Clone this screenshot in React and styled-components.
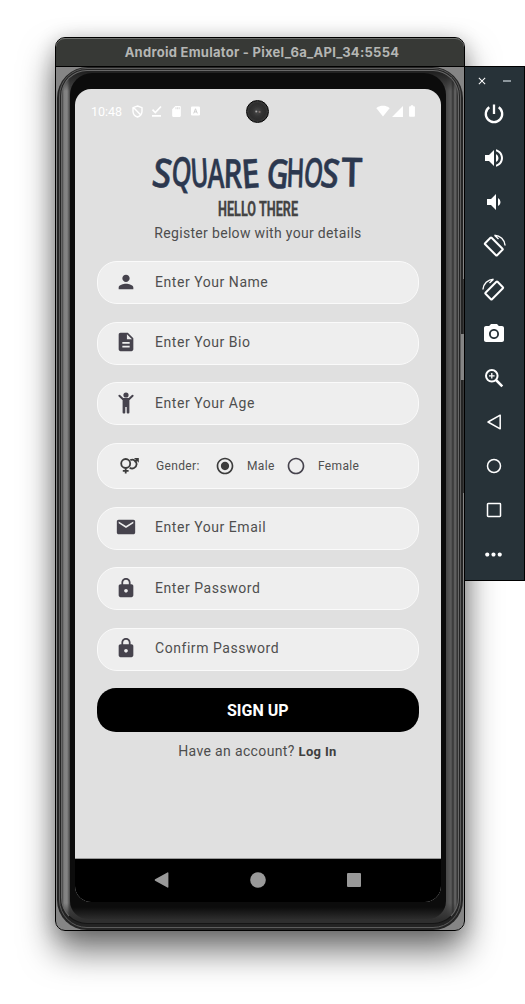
import React from "react";
import styled, { createGlobalStyle } from "styled-components";
import {
  MdPerson, MdDescription, MdEmail, MdLock, MdVolumeUp, MdVolumeDown,
  MdPhotoCamera, MdSdCard, MdSignalWifi4Bar, MdSignalCellular4Bar, MdBatteryFull,
  MdRadioButtonChecked, MdRadioButtonUnchecked, MdMoreHoriz, MdClose,
} from "react-icons/md";

const GlobalStyle = createGlobalStyle`
  * { box-sizing: border-box; }
  body { margin: 0; background: #fff; font-family: Roboto, sans-serif; overflow: hidden; }
  svg { display: block; flex: none; }
`;

const Desktop = styled.main`
  width: 525px;
  height: 1004px;
  display: flex;
  align-items: flex-start;
  padding: 37px 0 0 55px;
  background: #fff;
  overflow: hidden;
`;

const Window = styled.section`
  width: 410px;
  height: 894px;
  flex: none;
  border: 1px solid #000;
  border-radius: 10px;
  background: #858585;
  overflow: hidden;
  display: flex;
  flex-direction: column;
`;

const WindowShadow = styled.div`
  flex: none;
  border-radius: 10px;
  box-shadow: 0 20px 34px rgba(0, 0, 0, 0.55), 0 2px 20px rgba(0, 0, 0, 0.2);
`;

const TitleBar = styled.header`
  height: 29px;
  flex: none;
  display: flex;
  align-items: center;
  justify-content: center;
  background: #373936;
  border-top: 1px solid #70726f;
  border-bottom: 1px solid #000;
  border-radius: 9px 9px 0 0;
  color: #b5b6b4;
  font: 700 13px Inter, sans-serif;
  letter-spacing: 0.27px;
  padding: 0 0 2px 4px;
  white-space: pre;
`;

const Rim = styled.div`
  position: relative;
  flex: 1;
  margin: 0 1px;
  padding: 1px 2px 2px;
  border-radius: 31px 31px 30px 30px;
  background: #252525;
  display: flex;
`;

/* Hardware key on the right edge, drawn over the rim */
const SideKey = styled.span`
  position: absolute;
  right: ${(p) => (p.$raised ? 0 : -1)}px;
  top: ${(p) => p.$top}px;
  width: ${(p) => (p.$raised ? 2 : 1)}px;
  height: ${(p) => p.$h}px;
  background: ${(p) => (p.$raised ? "#858585" : "#3a3a3a")};
`;

const Bevel = styled.div`
  flex: 1;
  display: flex;
  border-radius: 28px;
  border: 1px solid #5c5c5c;
  background: #232323;
  padding: 1px 1px 3px;
`;

const Metal = styled.div`
  flex: 1;
  display: flex;
  border-radius: 26px;
  padding: 2px 12px 4px 8px;
  border: 1px solid #686868;
  border-bottom-color: #151515;
  background:
    linear-gradient(#222 0, #222 2px, transparent 20px, transparent calc(100% - 20px), #2e2e2e calc(100% - 3px)),
    linear-gradient(90deg, #444 0, #808080 2px, #858585 5px, #444 8px, #222 50%, #484848 calc(100% - 12px), #5c5c5c calc(100% - 7px), #333 calc(100% - 5px), #6a6a6a calc(100% - 3px), #282828 100%);
`;

const Bezel = styled.div`
  flex: 1;
  border-radius: 22px 22px 18px 18px;
  background: linear-gradient(#0c0c0c 0, #0c0c0c 98.6%, #2c2c2c 100%);
  padding: 16px 5px 0;
`;

const Screen = styled.div`
  width: 366px;
  height: 813px;
  border-radius: 16px;
  overflow: hidden;
  display: flex;
  flex-direction: column;
  background: #e0e0e0;
`;

const StatusBar = styled.div`
  height: 44px;
  flex: none;
  display: flex;
  align-items: center;
  padding: 0 22px 0 16px;
  color: #fff;
`;

const Clock = styled.span`
  font-size: 12.5px;
  width: 41px;
`;

const StatusGroup = styled.div`
  display: flex;
  align-items: center;
  gap: ${(p) => p.$gap}px;
`;

const Camera = styled.div`
  width: 23px;
  height: 23px;
  border-radius: 50%;
  border: 1px solid #000;
  margin-left: 46px;
  margin-right: auto;
  background:
    radial-gradient(circle at 44% 50%, #bbb 0, transparent 1.5px),
    radial-gradient(circle at 60% 52%, #93817c 0, transparent 1.5px),
    radial-gradient(circle, #4a4a4a 0, #333 5px, #2d2d2d 8px, #3c3c3c 11px);
`;

const Heading = styled.div`
  height: 128px;
  flex: none;
  display: flex;
  flex-direction: column;
  align-items: center;
`;

const Brand = styled.h1`
  margin: 0;
  height: 66px;
  padding-top: 20px;
  display: flex;
  align-items: center;
  color: #2c384f;
`;

const BrandMark = styled.svg`
  width: 212px;
  height: 38px;
  overflow: visible;
`;

const Greeting = styled.svg`
  width: 80px;
  height: 22px;
  overflow: visible;
  color: #444;
`;

const Lead = styled.p`
  margin: 3px 0 0;
  font-size: 14px;
  line-height: 18px;
  letter-spacing: 0.32px;
  color: #4d4d4d;
  white-space: nowrap;
`;

const Form = styled.form`
  display: flex;
  flex-direction: column;
  gap: 17.5px;
  padding: 0 22.5px 0 22px;
`;

const Field = styled.label`
  height: ${(p) => (p.$tall ? 46.5 : 43)}px;
  border-radius: 20px;
  border: 1px solid #fafafa;
  background: #eee;
  display: flex;
  align-items: center;
  padding-left: ${(p) => (p.$tall ? 22 : 17)}px;
  padding-bottom: ${(p) => (p.$tall ? 0 : 1.2)}px;
  color: #454545;
`;

const FieldIcon = styled.span`
  width: ${(p) => (p.$wide ? 36 : 40)}px;
  display: flex;
  color: #46434d;
`;

const FieldText = styled.span`
  font-size: 14px;
  letter-spacing: 0.55px;
  color: #4f4f4f;
`;

const SmallText = styled.span`
  font-size: 12px;
  letter-spacing: 0.35px;
  color: #4f4f4f;
  width: ${(p) => p.$w}px;
`;

const Radio = styled.span`
  display: flex;
  width: ${(p) => p.$w}px;
  color: ${(p) => (p.$on ? "#3c3c3c" : "#46434d")};
`;

const SignUp = styled.button`
  height: 44px;
  border: 0;
  border-radius: 19px;
  background: #000;
  color: #fff;
  font: 700 16px Roboto, sans-serif;
  padding: 0;
`;

const LoginLine = styled.p`
  margin: 10px 1px 0 0;
  text-align: center;
  font-size: 14px;
  line-height: 18px;
  letter-spacing: 0.35px;
  color: #4d4d4d;
  white-space: nowrap;
  b { font-size: 13px; color: #3f3f3f; }
`;

const NavBar = styled.nav`
  margin-top: auto;
  height: 44px;
  flex: none;
  background: #000;
  border-top: 1px solid #999;
  padding: 0 1px 2px 0;
  display: flex;
  align-items: center;
  justify-content: center;
  gap: 80px;
`;

const Toolbar = styled.aside`
  width: 61px;
  height: 515px;
  margin: 29px 0 0 -1px;
  flex: none;
  background: #273238;
  border: 1px solid #000;
  color: #fff;
  display: flex;
  flex-direction: column;
  align-items: center;
  z-index: 1;
`;

const ToolbarTop = styled.div`
  height: 25px;
  width: 100%;
  padding: 3px 13px 0 11px;
  display: flex;
  align-items: center;
  justify-content: space-between;
`;

const Dash = styled.span`
  width: 8px;
  height: 2px;
  background: #8d979d;
`;

const Tool = styled.span`
  height: 44px;
  width: 100%;
  padding: 0 2px 0 0;
  display: flex;
  align-items: center;
  justify-content: center;
`;

const Child = () => (
  <svg width="22" height="22" viewBox="-3 0 22 22" fill="currentColor">
    <circle cx="8" cy="3" r="2.6" />
    <path d="M1.4 3.7 4.8 7h6.4l3.4-3.3" fill="none" stroke="currentColor" strokeWidth="2" strokeLinecap="round" strokeLinejoin="round" />
    <path d="M4.6 6.2h6.8v14.2a1 1 0 0 1-1 1h-.7a1 1 0 0 1-1-1V15H7.3v5.4a1 1 0 0 1-1 1h-.7a1 1 0 0 1-1-1z" />
  </svg>
);

const Gender = () => (
  <svg width="20" height="16" viewBox="0 0 20 16" fill="none" stroke="#3c3c3c" strokeWidth="1.8">
    <circle cx="5.7" cy="5.5" r="4.5" />
    <path d="M5.7 10v5.5M2.8 12.8h5.8M10.3 2.1a4.4 4.4 0 1 1-.6 7.6M14.5 4l3-2.6" />
    <path d="M14 0H18.8v4.8z" fill="#3c3c3c" stroke="none" />
  </svg>
);

const Shield = () => (
  <svg width="11" height="13" viewBox="0 0 11 13" fill="none" stroke="currentColor" strokeWidth="1.4">
    <path d="M5.5 1 10 2.7v3.5c0 2.5-1.7 4.8-4.5 5.8C2.7 11 1 8.7 1 6.2V2.7zM2 3l6.5 6.8" />
  </svg>
);

const CheckLine = () => (
  <svg width="11" height="12" viewBox="0 0 11 12" fill="none" stroke="currentColor" strokeWidth="1.7">
    <path d="m1.5 4.7 2.8 2.8 5.7-6M1 10.8h9" />
  </svg>
);

const LetterBadge = () => (
  <svg width="9" height="10" viewBox="0 0 10 10">
    <rect width="10" height="10" rx="1.3" fill="#fff" />
    <path d="m3 7.7 2-5.200 2 5.200M3.700 6h2.600" fill="none" stroke="#cfcfcf" strokeWidth="1.1" />
  </svg>
);

const Power = () => (
  <svg width="22" height="22" viewBox="0 0 22 22" fill="none" stroke="currentColor" strokeWidth="2.3">
    <path d="M6.3 4.2a8.2 8.2 0 1 0 9.4 0M11 1.5v9.5" />
  </svg>
);

const Magnifier = () => (
  <svg width="20" height="20" viewBox="0 0 20 20" fill="none" stroke="currentColor">
    <circle cx="7.8" cy="7.8" r="5.8" strokeWidth="2" />
    <path d="m12 12 6.300 6.300" strokeWidth="2.500" />
    <path d="M7.800 5v5.600M5 7.800h5.600" strokeWidth="1.300" />
  </svg>
);

const Rotate = ({ flip }) => (
  <svg width="24" height="24" viewBox="0 0 24 24" fill="none" stroke="currentColor">
    <g transform={flip ? "translate(24 0) scale(-1 1)" : undefined}>
      <rect x="7.2" y="4" width="9.2" height="17" rx=".8" strokeWidth="2" transform="rotate(-45 11.8 12.5)" />
      <path d="M12.5 1.2A11 11 0 0 1 23.1 11.5M12.5 1.2l4 3.8" strokeWidth="1.4" />
    </g>
  </svg>
);

const Outline = ({ children }) => (
  <svg width="16" height="16" viewBox="0 0 16 16" fill="none" stroke="currentColor" strokeWidth="1.5" strokeLinejoin="round">
    {children}
  </svg>
);

/* Each brand letter: character, left edge, baseline, rotation, advance width */
const LETTERS = [
  ["S", 1, 30.5, 9, 19], ["Q", 19.5, 29, 5, 20], ["U", 38.5, 30, -3, 18], ["A", 55.5, 31, 0, 17],
  ["R", 71.5, 31, 1, 19], ["E", 89.5, 31, -4, 18], ["G", 115, 31, 6, 22], ["H", 134.5, 30, 2, 18],
  ["O", 152, 30, 8, 19], ["S", 169.5, 30.5, 9, 18], ["T", 189.5, 29.5, 1, 21],
];

const TextField = ({ icon, children }) => (
  <Field>
    <FieldIcon>{icon}</FieldIcon>
    <FieldText>{children}</FieldText>
  </Field>
);

export default function App() {
  return (
    <>
      <GlobalStyle />
      <Desktop>
        <WindowShadow>
          <Window>
            <TitleBar>Android Emulator - Pixel_6a_API_34:5554</TitleBar>
            <Rim>
              <Bevel><Metal><Bezel>
                <Screen>
                  <StatusBar>
                    <Clock>10:48</Clock>
                    <StatusGroup $gap={8}>
                      <Shield /><CheckLine /><MdSdCard size={13} /><LetterBadge />
                    </StatusGroup>
                    <Camera />
                    <StatusGroup $gap={1}>
                      <MdSignalWifi4Bar size={14} /><MdSignalCellular4Bar size={13} /><MdBatteryFull size={14} />
                    </StatusGroup>
                  </StatusBar>
                  <Heading>
                    <Brand>
                      <BrandMark viewBox="0 0 212 38" fill="currentColor" stroke="currentColor" strokeWidth="0.5" strokeLinejoin="round">
                        {LETTERS.map(([c, x, y, r, w], i) => (
                          <text key={i} x={x} y={y} fontSize="40" fontWeight="600" fontFamily="Open Sans, sans-serif" textLength={w} lengthAdjust="spacingAndGlyphs" transform={`rotate(${r} ${x + w / 2} 16)`}>{c}</text>
                        ))}
                      </BrandMark>
                    </Brand>
                    <Greeting viewBox="0 0 80 22" fill="currentColor" stroke="currentColor" strokeWidth="0.3">
                      <text x="0" y="17" fontSize="19.5" fontWeight="700" fontFamily="Roboto, sans-serif" textLength="80" lengthAdjust="spacingAndGlyphs">HELLO THERE</text>
                    </Greeting>
                    <Lead>Register below with your details</Lead>
                  </Heading>
                  <Form onSubmit={(e) => e.preventDefault()}>
                    <TextField icon={<MdPerson size={22} />}>Enter Your Name</TextField>
                    <TextField icon={<MdDescription size={22} />}>Enter Your Bio</TextField>
                    <TextField icon={<Child />}>Enter Your Age</TextField>
                    <Field as="div" $tall>
                      <FieldIcon $wide><Gender /></FieldIcon>
                      <SmallText $w={59}>Gender:</SmallText>
                      <Radio $on $w={32}><MdRadioButtonChecked size={20} /></Radio>
                      <SmallText $w={39}>Male</SmallText>
                      <Radio $w={32}><MdRadioButtonUnchecked size={20} /></Radio>
                      <SmallText $w={50}>Female</SmallText>
                    </Field>
                    <TextField icon={<MdEmail size={22} />}>Enter Your Email</TextField>
                    <TextField icon={<MdLock size={22} />}>Enter Password</TextField>
                    <TextField icon={<MdLock size={22} />}>Confirm Password</TextField>
                    <SignUp>SIGN UP</SignUp>
                  </Form>
                  <LoginLine>Have an account? <b>Log In</b></LoginLine>
                  <NavBar>
                    <svg width="16" height="16" viewBox="0 0 16 16" fill="#999"><path d="M1.1 7.2 13.4.5q1-.5 1 .7v13.6q0 1.2-1 .7L1.1 8.8q-1-.8 0-1.6z" /></svg>
                    <svg width="16" height="16" viewBox="0 0 16 16" fill="#999"><circle cx="8" cy="8" r="7.8" /></svg>
                    <svg width="16" height="16" viewBox="0 0 16 16" fill="#999"><rect x="1" y="1" width="14" height="14" rx="1" /></svg>
                  </NavBar>
                </Screen>
              </Bezel></Metal></Bevel>
              <SideKey $top={212} $h={55} />
              <SideKey $raised $top={267} $h={46} />
              <SideKey $top={313} $h={113} />
            </Rim>
          </Window>
        </WindowShadow>
        <Toolbar>
          <ToolbarTop><MdClose size={12} /><Dash /></ToolbarTop>
          <Tool><Power /></Tool>
          <Tool><MdVolumeUp size={24} /></Tool>
          <Tool><MdVolumeDown size={24} /></Tool>
          <Tool><Rotate /></Tool>
          <Tool><Rotate flip /></Tool>
          <Tool><MdPhotoCamera size={24} /></Tool>
          <Tool><Magnifier /></Tool>
          <Tool><Outline><path d="M14.2 1.2v13.6L2 8z" /></Outline></Tool>
          <Tool><Outline><circle cx="8" cy="8" r="6.5" /></Outline></Tool>
          <Tool><Outline><rect x="1.5" y="1.5" width="13" height="13" rx=".7" /></Outline></Tool>
          <Tool><MdMoreHoriz size={25} /></Tool>
        </Toolbar>
      </Desktop>
    </>
  );
}
